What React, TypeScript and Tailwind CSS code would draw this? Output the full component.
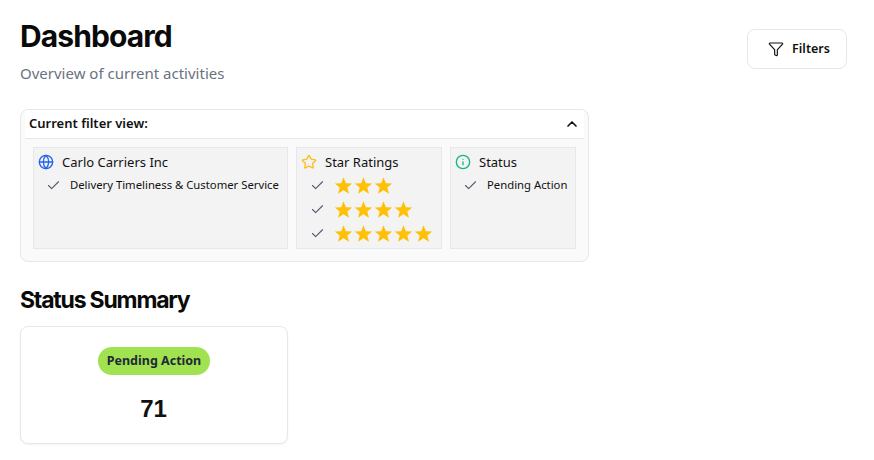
import { Check, ChevronUp, Filter, Globe, Info, Star } from "lucide-react";

function SolidStar() {
  return (
    <svg viewBox="0 0 24 24" className="h-[19px] w-[19px] fill-[#ffc107]">
      <polygon points="12,1.5 15,9 23,9.4 16.8,14.5 18.9,22.5 12,18 5.1,22.5 7.2,14.5 1,9.4 9,9" />
    </svg>
  );
}

function StarRow({ count }: { count: number }) {
  return (
    <div className="flex h-6 items-center">
      <Check className="ml-[9px] h-[15px] w-[15px] text-[#565b6e]" strokeWidth={1.75} />
      <div className="ml-[9px] flex gap-[1px]">
        {Array.from({ length: count }).map((_, i) => (
          <SolidStar key={i} />
        ))}
      </div>
    </div>
  );
}

export default function App() {
  return (
    <div className="h-[460px] w-[874px] overflow-hidden bg-white pl-5 pr-[27px] font-['Noto_Sans','Open_Sans',sans-serif] text-[#111]">
      <div className="flex items-start justify-between">
        <div className="pt-[17px]">
          <h1 className="font-['Inter',sans-serif] text-[30px] leading-[38px] font-bold tracking-[-0.9px] text-[#0a0a0a]">Dashboard</h1>
          <p className="mt-[8px] text-[15px] leading-5 text-[#6b7280]">Overview of current activities</p>
        </div>
        <button className="mt-[29px] flex h-10 w-[100px] items-center justify-center gap-2 rounded-lg border border-[#e5e7eb] bg-white pl-[4px] text-[12.5px] font-semibold">
          <Filter className="h-4 w-4" strokeWidth={1.75} />
          Filters
        </button>
      </div>

      <div className="mt-[26px] h-[153px] w-[569px] overflow-hidden rounded-lg border border-[#e5e7eb] bg-[#fafafa]">
        <div className="mx-1 flex h-[29px] items-center justify-between border-b border-[#e5e7eb] bg-white pr-1 pl-1">
          <span className="text-[13px] font-semibold text-[#111]">Current filter view:</span>
          <ChevronUp className="h-4 w-4 text-[#111]" strokeWidth={2.5} />
        </div>
        <div className="flex gap-2 pt-2 pl-3">
          <div className="h-[102px] w-[255px] border border-[#e5e7eb] bg-[#f3f3f3] pt-1 pl-1">
            <div className="flex items-center gap-2 text-[13px] leading-5">
              <Globe className="h-4 w-4 text-[#2563eb]" strokeWidth={2} />
              Carlo Carriers Inc
            </div>
            <div className="mt-[5px] flex items-center text-[11.3px] leading-4">
              <Check className="ml-2 h-[15px] w-[15px] text-[#565b6e]" strokeWidth={1.75} />
              <span className="ml-[9px]">Delivery Timeliness &amp; Customer Service</span>
            </div>
          </div>
          <div className="h-[102px] w-[146px] border border-[#e5e7eb] bg-[#f3f3f3] pt-1 pl-1">
            <div className="flex items-center gap-2 text-[13px] leading-5">
              <Star className="h-4 w-4 text-[#fbbf24]" strokeWidth={2} />
              Star Ratings
            </div>
            <div className="mt-[1px]">
              <StarRow count={3} />
              <StarRow count={4} />
              <StarRow count={5} />
            </div>
          </div>
          <div className="h-[102px] w-[126px] border border-[#e5e7eb] bg-[#f3f3f3] pt-1 pl-1">
            <div className="flex items-center gap-2 text-[13px] leading-5">
              <Info className="h-4 w-4 text-[#10b981]" strokeWidth={2} />
              Status
            </div>
            <div className="mt-[5px] flex items-center text-[11.3px] leading-4">
              <Check className="ml-2 h-[15px] w-[15px] text-[#565b6e]" strokeWidth={1.75} />
              <span className="ml-[9px]">Pending Action</span>
            </div>
          </div>
        </div>
      </div>

      <h2 className="mt-[23px] font-['Inter',sans-serif] text-[23px] leading-[30px] font-bold tracking-[-1.2px] text-[#0a0a0a]">Status Summary</h2>
      <div className="mt-[11px] flex h-[118px] w-[268px] flex-col items-center rounded-lg border border-[#e5e7eb] bg-white pt-5 shadow-xs">
        <span className="flex h-7 w-28 items-center justify-center rounded-full bg-[#a0e24f] pt-px text-[12.5px] font-bold text-[#1f2937]">Pending Action</span>
        <span className="mt-[18px] mr-px font-['Liberation_Sans',sans-serif] text-2xl leading-8 font-bold text-[#111]">71</span>
      </div>
    </div>
  );
}
